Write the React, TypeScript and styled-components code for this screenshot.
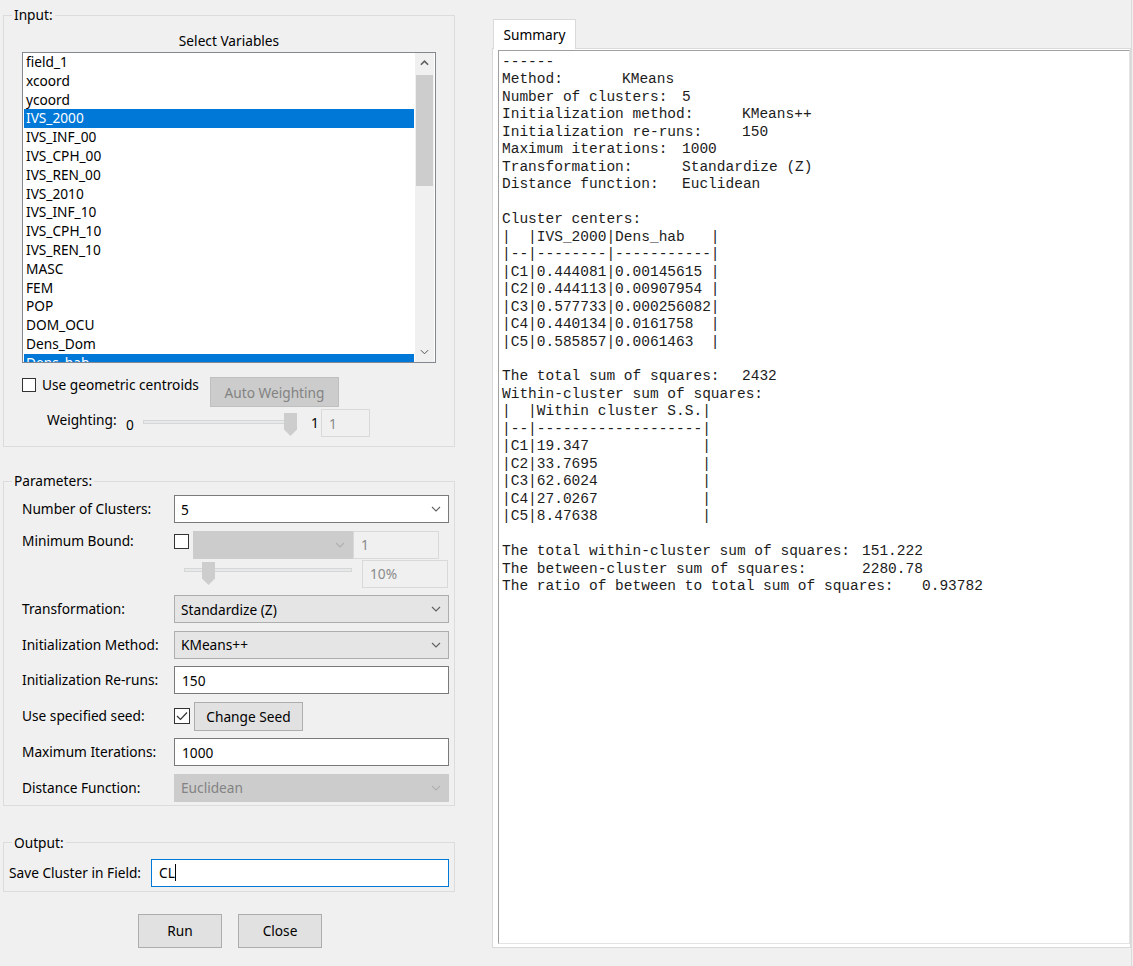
import styled, { createGlobalStyle } from 'styled-components'

const GlobalStyle = createGlobalStyle`
  html, body { margin: 0; padding: 0; }
  body {
    background: #f0f0f0;
    font-family: 'Noto Sans', sans-serif;
    font-size: 13.7px;
    color: #000;
  }
  * { box-sizing: border-box; }
`

const Window = styled.div`
  display: flex;
  width: 1133px;
  height: 966px;
  overflow: hidden;
  background: #f0f0f0;
`

const LeftPane = styled.div`
  width: 460px;
  flex-shrink: 0;
  padding: 5px 0 0 3px;
  display: flex;
  flex-direction: column;
`

const Group = styled.fieldset<{ $mt?: number }>`
  width: 452px;
  margin: ${p => p.$mt ?? 0}px 0 0 0;
  padding: 0;
  min-width: 0;
  border: 1px solid #dcdcdc;
`

const Legend = styled.legend`
  margin-left: 8px;
  padding: 0 2px;
  line-height: 20px;
`

const GroupBody = styled.div<{ $pad: string }>`
  padding: ${p => p.$pad};
  display: flex;
  flex-direction: column;
`

const Title = styled.div`
  text-align: center;
  line-height: 20px;
`

const ListBox = styled.div`
  margin-top: 1px;
  width: 414px;
  height: 311px;
  border: 1px solid #828790;
  background: #fff;
  display: flex;
  padding-right: 1px;
`

const Items = styled.div`
  flex: 1;
  overflow: hidden;
  padding: 0 1px;
`

const Item = styled.div<{ $selected?: boolean }>`
  height: 18.8px;
  line-height: 18.8px;
  padding-left: 2px;
  white-space: nowrap;
  background: ${p => (p.$selected ? '#0078d7' : 'transparent')};
  color: ${p => (p.$selected ? '#fff' : '#000')};
`

const ScrollBar = styled.div`
  width: 19px;
  background: #f0f0f0;
  display: flex;
  flex-direction: column;
`

const ScrollArrow = styled.div`
  height: 20px;
  display: flex;
  align-items: center;
  justify-content: center;
`

const ScrollTrack = styled.div`
  flex: 1;
  padding: 2px 1px 0 1px;
`

const ScrollThumb = styled.div`
  height: 111px;
  background: #cdcdcd;
`

const CheckRow = styled.div`
  margin-top: 14px;
  display: flex;
  align-items: flex-start;
`

const CheckLabel = styled.label<{ $width?: number }>`
  display: flex;
  align-items: flex-start;
  gap: 6px;
  line-height: 16px;
  width: ${p => (p.$width ? `${p.$width}px` : 'auto')};
`

const Box = styled.span<{ $mt?: number }>`
  width: 14px;
  height: 14px;
  flex-shrink: 0;
  margin-top: ${p => p.$mt ?? 0}px;
  border: 1px solid #333;
  background: #fff;
  display: flex;
  align-items: center;
  justify-content: center;
`

const Button = styled.div<{ $w: number; $h: number; $disabled?: boolean }>`
  width: ${p => p.$w}px;
  height: ${p => p.$h}px;
  display: flex;
  align-items: center;
  justify-content: center;
  background: ${p => (p.$disabled ? '#cccccc' : '#e1e1e1')};
  border: 1px solid ${p => (p.$disabled ? '#bfbfbf' : '#adadad')};
  color: ${p => (p.$disabled ? '#838383' : '#000')};
  flex-shrink: 0;
`

const WeightRow = styled.div`
  margin-top: 2px;
  height: 28px;
  display: flex;
  align-items: flex-start;
  padding-left: 25px;
`

const Tick = styled.span<{ $w: number; $mt: number; $ml?: number }>`
  width: ${p => p.$w}px;
  margin-top: ${p => p.$mt}px;
  margin-left: ${p => p.$ml ?? 0}px;
  line-height: 20px;
  flex-shrink: 0;
`

const Slider = styled.div<{ $w: number; $mt: number; $ml?: number }>`
  position: relative;
  width: ${p => p.$w}px;
  height: 23px;
  margin-top: ${p => p.$mt}px;
  margin-left: ${p => p.$ml ?? 0}px;
  flex-shrink: 0;
  display: flex;
  align-items: center;
`

const Track = styled.div`
  height: 4px;
  width: 100%;
  background: #e7eaea;
  border: 1px solid #d6d6d6;
  margin-top: -6px;
`

const Thumb = styled.svg`
  position: absolute;
  top: 0;
`

const TextBox = styled.div<{ $w: number; $disabled?: boolean; $focus?: boolean }>`
  width: ${p => p.$w}px;
  height: 28px;
  flex-shrink: 0;
  display: flex;
  align-items: center;
  padding-left: 7px;
  background: ${p => (p.$disabled ? '#f0f0f0' : '#fff')};
  border: 1px solid ${p => (p.$focus ? '#0078d7' : p.$disabled ? '#d9d9d9' : '#7a7a7a')};
  color: ${p => (p.$disabled ? '#8a8a8a' : '#000')};
  white-space: nowrap;
`

const Caret = styled.span`
  display: inline-block;
  width: 1px;
  height: 17px;
  background: #000;
`

const Combo = styled.div<{ $w: number; $variant: 'edit' | 'read' | 'off' }>`
  width: ${p => p.$w}px;
  height: 28px;
  flex-shrink: 0;
  display: flex;
  align-items: center;
  justify-content: space-between;
  padding: 0 7px 0 6px;
  background: ${p => (p.$variant === 'edit' ? '#fff' : p.$variant === 'read' ? '#e5e5e5' : '#cccccc')};
  border: 1px solid ${p => (p.$variant === 'edit' ? '#7a7a7a' : p.$variant === 'read' ? '#adadad' : '#cccccc')};
  color: ${p => (p.$variant === 'off' ? '#838383' : '#000')};
`

const ParamRows = styled.div`
  display: flex;
  flex-direction: column;
  gap: 7.5px;
`

const FieldRow = styled.div<{ $h?: number }>`
  display: flex;
  align-items: center;
  height: ${p => p.$h ?? 28}px;
`

const FieldLabel = styled.div<{ $w: number; $top?: boolean }>`
  width: ${p => p.$w}px;
  flex-shrink: 0;
  line-height: 20px;
  align-self: ${p => (p.$top ? 'flex-start' : 'center')};
  white-space: nowrap;
`

const Control = styled.div`
  display: flex;
  flex-direction: column;
  gap: 1px;
`

const SubRow = styled.div`
  display: flex;
  align-items: flex-start;
`

const ButtonBar = styled.div`
  margin-top: 22px;
  display: flex;
  justify-content: center;
  gap: 16px;
  padding-right: 3px;
`

const RightPane = styled.div`
  margin-left: 32px;
  width: 640px;
  padding-top: 19px;
  display: flex;
  flex-direction: column;
  border-right: 1px solid #dadada;
`

const TabStrip = styled.div`
  display: flex;
  padding-left: 1px;
  position: relative;
  z-index: 1;
  margin-bottom: -1px;
`

const Tab = styled.div`
  width: 83px;
  height: 30px;
  background: #fff;
  border: 1px solid #d9d9d9;
  border-bottom: none;
  display: flex;
  align-items: center;
  justify-content: center;
`

const Page = styled.div`
  height: 900px;
  background: #fff;
  border: 1px solid #d9d9d9;
  padding: 1px 0 3px 5px;
  display: flex;
`

const Output = styled.pre`
  flex: 1;
  margin: 0;
  border: 1px solid #a0a0a0;
  border-right-color: #e3e3e3;
  border-bottom-color: #e3e3e3;
  padding: 3px 0 0 3px;
  font-family: 'Liberation Mono', 'Courier New', monospace;
  font-size: 14.5px;
  line-height: 17.47px;
  tab-size: 60px;
  color: #1c1c1c;
  white-space: pre;
  overflow: hidden;
`

function Chevron({ up, color = '#606060', w = 10 }: { up?: boolean; color?: string; w?: number }) {
  return (
    <svg width={w} height={6} viewBox="0 0 10 6" fill="none">
      <path
        d={up ? 'M1 5 L5 1 L9 5' : 'M1 1 L5 5 L9 1'}
        stroke={color}
        strokeWidth={up ? 1.8 : 1.1}
      />
    </svg>
  )
}

function SliderThumb({ left }: { left: number }) {
  return (
    <Thumb width="13" height="23" viewBox="0 0 13 23" style={{ left }}>
      <path d="M0 0 H13 V16.5 L6.5 23 L0 16.5 Z" fill="#cdcdcd" />
    </Thumb>
  )
}

const variables = [
  'field_1', 'xcoord', 'ycoord', 'IVS_2000', 'IVS_INF_00', 'IVS_CPH_00', 'IVS_REN_00',
  'IVS_2010', 'IVS_INF_10', 'IVS_CPH_10', 'IVS_REN_10', 'MASC', 'FEM', 'POP', 'DOM_OCU',
  'Dens_Dom', 'Dens_hab',
]
const selected = ['IVS_2000', 'Dens_hab']

const summary = `------
Method:\tKMeans
Number of clusters:\t5
Initialization method:\tKMeans++
Initialization re-runs:\t150
Maximum iterations:\t1000
Transformation:\tStandardize (Z)
Distance function:\tEuclidean

Cluster centers:
|  |IVS_2000|Dens_hab   |
|--|--------|-----------|
|C1|0.444081|0.00145615 |
|C2|0.444113|0.00907954 |
|C3|0.577733|0.000256082|
|C4|0.440134|0.0161758  |
|C5|0.585857|0.0061463  |

The total sum of squares:\t2432
Within-cluster sum of squares:
|  |Within cluster S.S.|
|--|-------------------|
|C1|19.347             |
|C2|33.7695            |
|C3|62.6024            |
|C4|27.0267            |
|C5|8.47638            |

The total within-cluster sum of squares:\t151.222
The between-cluster sum of squares:\t2280.78
The ratio of between to total sum of squares:\t0.93782
`

export default function App() {
  return (
    <Window>
      <GlobalStyle />
      <LeftPane>
        <Group>
          <Legend>Input:</Legend>
          <GroupBody $pad="6px 18px 9px 18px">
            <Title>Select Variables</Title>
            <ListBox>
              <Items>
                {variables.map(v => (
                  <Item key={v} $selected={selected.includes(v)}>{v}</Item>
                ))}
              </Items>
              <ScrollBar>
                <ScrollArrow><Chevron up w={9} /></ScrollArrow>
                <ScrollTrack><ScrollThumb /></ScrollTrack>
                <ScrollArrow><Chevron w={9} color="#505050" /></ScrollArrow>
              </ScrollBar>
            </ListBox>
            <CheckRow>
              <CheckLabel $width={188}>
                <Box $mt={1} />
                Use geometric centroids
              </CheckLabel>
              <Button $w={129} $h={30} $disabled>Auto Weighting</Button>
            </CheckRow>
            <WeightRow>
              <Tick $w={79} $mt={1}>Weighting:</Tick>
              <Tick $w={17} $mt={6}>0</Tick>
              <Slider $w={155} $mt={4}>
                <Track style={{ width: 148 }} />
                <SliderThumb left={141} />
              </Slider>
              <Tick $w={10} $mt={4} $ml={13}>1</Tick>
              <TextBox $w={49} $disabled>1</TextBox>
            </WeightRow>
          </GroupBody>
        </Group>

        <Group $mt={24}>
          <Legend>Parameters:</Legend>
          <GroupBody $pad="4px 4px 3px 18px">
            <ParamRows>
              <FieldRow>
                <FieldLabel $w={152}>Number of Clusters:</FieldLabel>
                <Combo $w={275} $variant="edit">5<Chevron /></Combo>
              </FieldRow>
              <FieldRow $h={57}>
                <FieldLabel $w={152} $top>Minimum Bound:</FieldLabel>
                <Control>
                  <SubRow>
                    <Box $mt={3} style={{ width: 15, height: 15 }} />
                    <Combo $w={160} $variant="off" style={{ marginLeft: 4 }}>
                      <span />
                      <Chevron color="#b0b0b0" />
                    </Combo>
                    <TextBox $w={86} $disabled>1</TextBox>
                  </SubRow>
                  <SubRow>
                    <Slider $w={168} $mt={2} $ml={10}>
                      <Track />
                      <SliderThumb left={18} />
                    </Slider>
                    <TextBox $w={86} $disabled style={{ marginLeft: 10 }}>10%</TextBox>
                  </SubRow>
                </Control>
              </FieldRow>
              <FieldRow>
                <FieldLabel $w={152}>Transformation:</FieldLabel>
                <Combo $w={275} $variant="read">Standardize (Z)<Chevron /></Combo>
              </FieldRow>
              <FieldRow>
                <FieldLabel $w={152}>Initialization Method:</FieldLabel>
                <Combo $w={275} $variant="read">KMeans++<Chevron /></Combo>
              </FieldRow>
              <FieldRow>
                <FieldLabel $w={152}>Initialization Re-runs:</FieldLabel>
                <TextBox $w={275}>150</TextBox>
              </FieldRow>
              <FieldRow $h={29}>
                <FieldLabel $w={152}>Use specified seed:</FieldLabel>
                <Box style={{ width: 16, height: 16 }}>
                  <svg width="12" height="10" viewBox="0 0 12 10" fill="none">
                    <path d="M1 5 L4.5 8.5 L11 1.5" stroke="#333" strokeWidth="1.2" />
                  </svg>
                </Box>
                <Button $w={109} $h={29} style={{ marginLeft: 4 }}>Change Seed</Button>
              </FieldRow>
              <FieldRow>
                <FieldLabel $w={152}>Maximum Iterations:</FieldLabel>
                <TextBox $w={275}>1000</TextBox>
              </FieldRow>
              <FieldRow>
                <FieldLabel $w={152}>Distance Function:</FieldLabel>
                <Combo $w={275} $variant="off">Euclidean<Chevron color="#b0b0b0" /></Combo>
              </FieldRow>
            </ParamRows>
          </GroupBody>
        </Group>

        <Group $mt={27}>
          <Legend>Output:</Legend>
          <GroupBody $pad="6px 4px 4px 5px">
            <FieldRow>
              <FieldLabel $w={142}>Save Cluster in Field:</FieldLabel>
              <TextBox $w={298} $focus>CL<Caret /></TextBox>
            </FieldRow>
          </GroupBody>
        </Group>

        <ButtonBar>
          <Button $w={84} $h={34}>Run</Button>
          <Button $w={84} $h={34}>Close</Button>
        </ButtonBar>
      </LeftPane>

      <RightPane>
        <TabStrip>
          <Tab>Summary</Tab>
        </TabStrip>
        <Page>
          <Output>{summary}</Output>
        </Page>
      </RightPane>
    </Window>
  )
}
